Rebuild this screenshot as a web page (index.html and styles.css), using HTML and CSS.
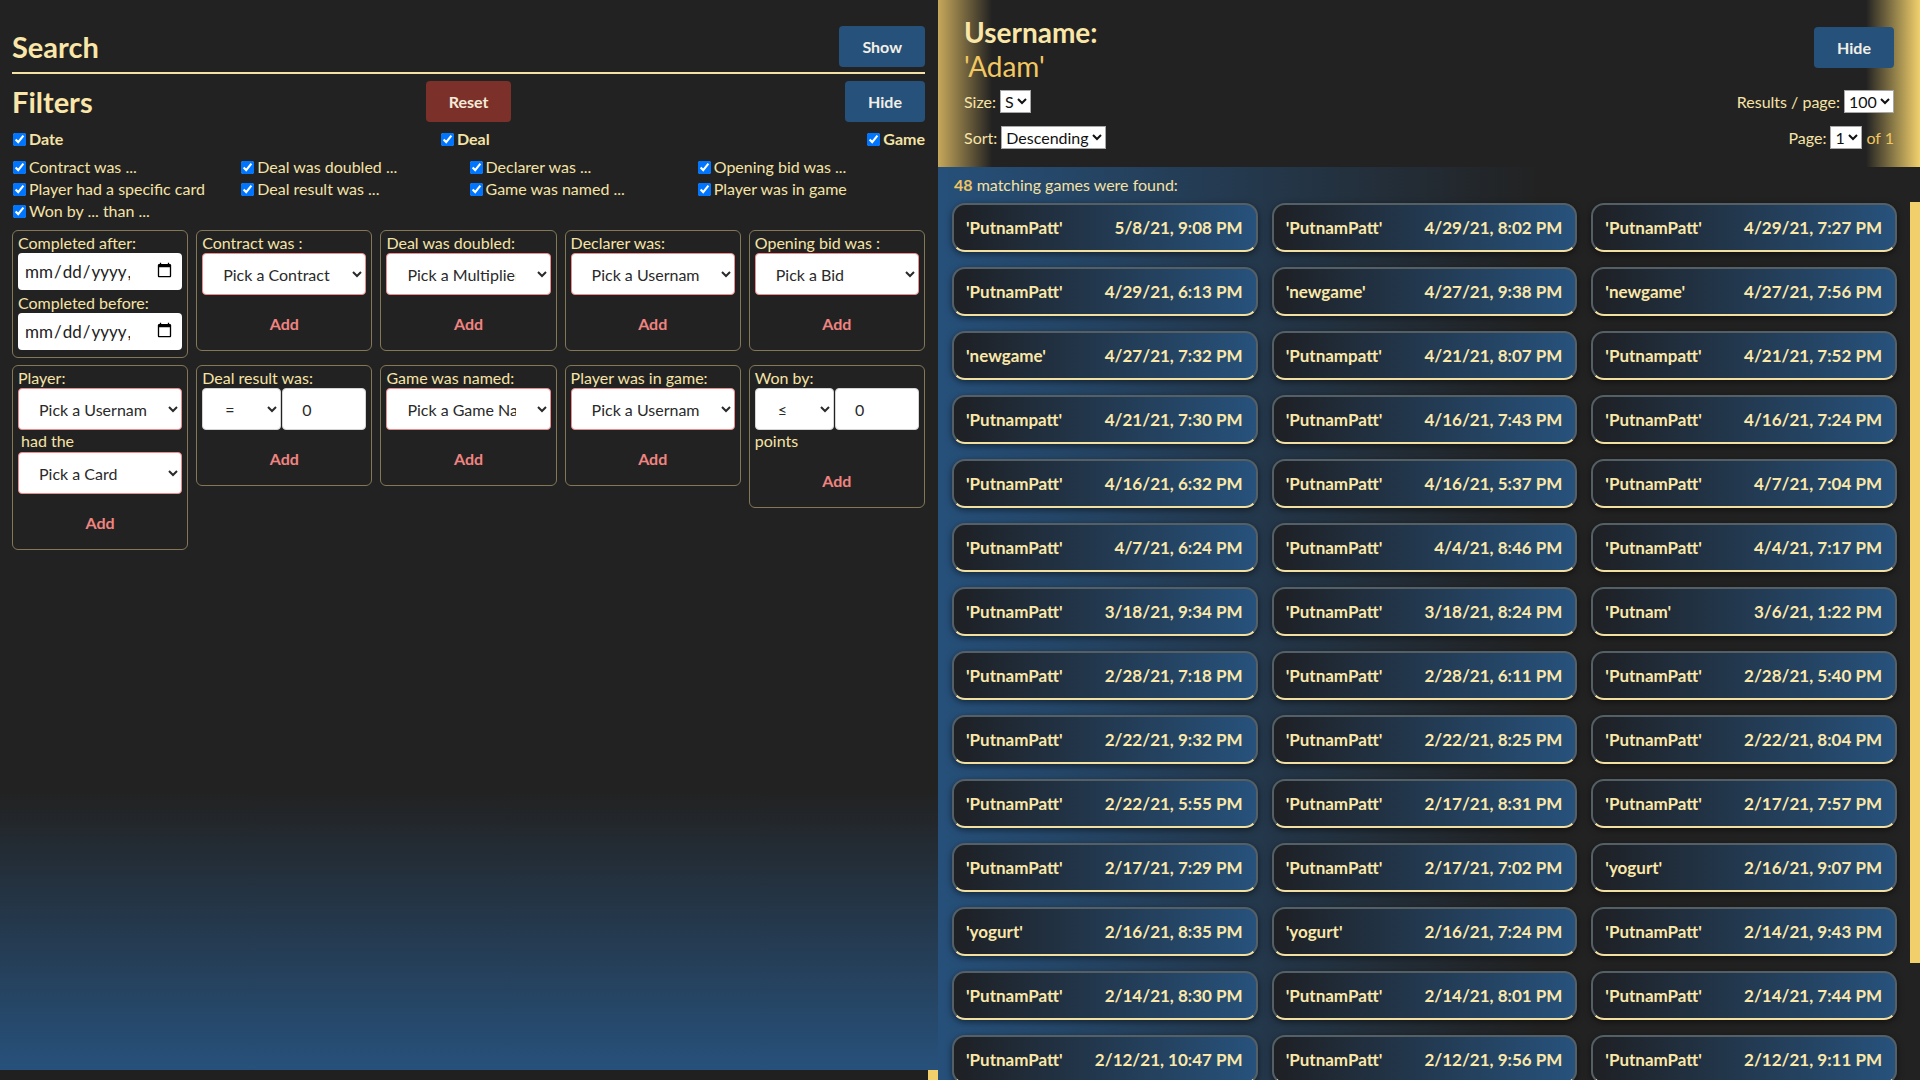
FILE: index.html
```html
<!DOCTYPE html>
<html lang="en">
<head>
<meta charset="utf-8">
<title>Search</title>
<link rel="stylesheet" href="styles.css">
</head>
<body>
<div class="app">
  <section class="search-panel">
    <div class="search-content">
      <div class="title-row">
        <h1 class="title">Search</h1>
        <button class="btn btn-blue">Show</button>
      </div>
      <hr class="rule">
      <div class="title-row filters-row">
        <h1 class="title">Filters</h1>
        <button class="btn btn-red">Reset</button>
        <button class="btn btn-blue btn-end">Hide</button>
      </div>

      <div class="cat-row">
        <label class="check cat"><input type="checkbox" checked>Date</label>
        <label class="check cat"><input type="checkbox" checked>Deal</label>
        <label class="check cat"><input type="checkbox" checked>Game</label>
      </div>

      <div class="check-grid">
        <label class="check"><input type="checkbox" checked>Contract was ...</label>
        <label class="check"><input type="checkbox" checked>Deal was doubled ...</label>
        <label class="check"><input type="checkbox" checked>Declarer was ...</label>
        <label class="check"><input type="checkbox" checked>Opening bid was ...</label>
        <label class="check"><input type="checkbox" checked>Player had a specific card</label>
        <label class="check"><input type="checkbox" checked>Deal result was ...</label>
        <label class="check"><input type="checkbox" checked>Game was named ...</label>
        <label class="check"><input type="checkbox" checked>Player was in game</label>
        <label class="check"><input type="checkbox" checked>Won by ... than ...</label>
      </div>

      <div class="filter-grid">
        <div class="filter-box">
          <label class="f-label">Completed after:</label>
          <input class="date-input" type="datetime-local">
          <label class="f-label">Completed before:</label>
          <input class="date-input last" type="datetime-local">
        </div>
        <div class="filter-box">
          <label class="f-label">Contract was :</label>
          <select class="pick"><option>Pick a Contract</option></select>
          <button class="add">Add</button>
        </div>
        <div class="filter-box">
          <label class="f-label">Deal was doubled:</label>
          <select class="pick"><option>Pick a Multiplier</option></select>
          <button class="add">Add</button>
        </div>
        <div class="filter-box">
          <label class="f-label">Declarer was:</label>
          <select class="pick"><option>Pick a Username</option></select>
          <button class="add">Add</button>
        </div>
        <div class="filter-box">
          <label class="f-label">Opening bid was :</label>
          <select class="pick"><option>Pick a Bid</option></select>
          <button class="add">Add</button>
        </div>

        <div class="filter-box">
          <label class="f-label">Player:</label>
          <select class="pick"><option>Pick a Username</option></select>
          <span class="f-text indent">had the</span>
          <select class="pick"><option>Pick a Card</option></select>
          <button class="add">Add</button>
        </div>
        <div class="filter-box">
          <label class="f-label">Deal result was:</label>
          <div class="pair">
            <select class="op"><option>=</option></select>
            <input class="num" type="number" value="0">
          </div>
          <button class="add">Add</button>
        </div>
        <div class="filter-box">
          <label class="f-label">Game was named:</label>
          <select class="pick"><option>Pick a Game Name</option></select>
          <button class="add">Add</button>
        </div>
        <div class="filter-box">
          <label class="f-label">Player was in game:</label>
          <select class="pick"><option>Pick a Username</option></select>
          <button class="add">Add</button>
        </div>
        <div class="filter-box">
          <label class="f-label">Won by:</label>
          <div class="pair">
            <select class="op"><option>&le;</option></select>
            <input class="num" type="number" value="0">
          </div>
          <span class="f-text">points</span>
          <button class="add">Add</button>
        </div>
      </div>
    </div>
    <div class="hscroll"><div class="grip"></div></div>
  </section>

  <section class="results-panel">
    <header class="results-head">
      <h2 class="user-title">Username:<span class="user-name">'Adam'</span></h2>
      <button class="btn btn-blue head-btn">Hide</button>
      <div class="ctl ctl-left">Size:<select class="mini"><option>S</option></select></div>
      <div class="ctl ctl-right">Results / page:<select class="mini"><option>100</option></select></div>
      <div class="ctl ctl-left">Sort:<select class="mini"><option>Descending</option></select></div>
      <div class="ctl ctl-right">Page:<select class="mini"><option>1</option></select><span class="gold of">of 1</span></div>
    </header>

    <div class="results-body">
      <div class="results-list">
        <p class="count"><b class="gold">48</b> matching games were found:</p>
        <div class="game-grid">
          <div class="game"><span>'PutnamPatt'</span><span>5/8/21, 9:08 PM</span></div>
          <div class="game"><span>'PutnamPatt'</span><span>4/29/21, 8:02 PM</span></div>
          <div class="game"><span>'PutnamPatt'</span><span>4/29/21, 7:27 PM</span></div>
          <div class="game"><span>'PutnamPatt'</span><span>4/29/21, 6:13 PM</span></div>
          <div class="game"><span>'newgame'</span><span>4/27/21, 9:38 PM</span></div>
          <div class="game"><span>'newgame'</span><span>4/27/21, 7:56 PM</span></div>
          <div class="game"><span>'newgame'</span><span>4/27/21, 7:32 PM</span></div>
          <div class="game"><span>'Putnampatt'</span><span>4/21/21, 8:07 PM</span></div>
          <div class="game"><span>'Putnampatt'</span><span>4/21/21, 7:52 PM</span></div>
          <div class="game"><span>'Putnampatt'</span><span>4/21/21, 7:30 PM</span></div>
          <div class="game"><span>'PutnamPatt'</span><span>4/16/21, 7:43 PM</span></div>
          <div class="game"><span>'PutnamPatt'</span><span>4/16/21, 7:24 PM</span></div>
          <div class="game"><span>'PutnamPatt'</span><span>4/16/21, 6:32 PM</span></div>
          <div class="game"><span>'PutnamPatt'</span><span>4/16/21, 5:37 PM</span></div>
          <div class="game"><span>'PutnamPatt'</span><span>4/7/21, 7:04 PM</span></div>
          <div class="game"><span>'PutnamPatt'</span><span>4/7/21, 6:24 PM</span></div>
          <div class="game"><span>'PutnamPatt'</span><span>4/4/21, 8:46 PM</span></div>
          <div class="game"><span>'PutnamPatt'</span><span>4/4/21, 7:17 PM</span></div>
          <div class="game"><span>'PutnamPatt'</span><span>3/18/21, 9:34 PM</span></div>
          <div class="game"><span>'PutnamPatt'</span><span>3/18/21, 8:24 PM</span></div>
          <div class="game"><span>'Putnam'</span><span>3/6/21, 1:22 PM</span></div>
          <div class="game"><span>'PutnamPatt'</span><span>2/28/21, 7:18 PM</span></div>
          <div class="game"><span>'PutnamPatt'</span><span>2/28/21, 6:11 PM</span></div>
          <div class="game"><span>'PutnamPatt'</span><span>2/28/21, 5:40 PM</span></div>
          <div class="game"><span>'PutnamPatt'</span><span>2/22/21, 9:32 PM</span></div>
          <div class="game"><span>'PutnamPatt'</span><span>2/22/21, 8:25 PM</span></div>
          <div class="game"><span>'PutnamPatt'</span><span>2/22/21, 8:04 PM</span></div>
          <div class="game"><span>'PutnamPatt'</span><span>2/22/21, 5:55 PM</span></div>
          <div class="game"><span>'PutnamPatt'</span><span>2/17/21, 8:31 PM</span></div>
          <div class="game"><span>'PutnamPatt'</span><span>2/17/21, 7:57 PM</span></div>
          <div class="game"><span>'PutnamPatt'</span><span>2/17/21, 7:29 PM</span></div>
          <div class="game"><span>'PutnamPatt'</span><span>2/17/21, 7:02 PM</span></div>
          <div class="game"><span>'yogurt'</span><span>2/16/21, 9:07 PM</span></div>
          <div class="game"><span>'yogurt'</span><span>2/16/21, 8:35 PM</span></div>
          <div class="game"><span>'yogurt'</span><span>2/16/21, 7:24 PM</span></div>
          <div class="game"><span>'PutnamPatt'</span><span>2/14/21, 9:43 PM</span></div>
          <div class="game"><span>'PutnamPatt'</span><span>2/14/21, 8:30 PM</span></div>
          <div class="game"><span>'PutnamPatt'</span><span>2/14/21, 8:01 PM</span></div>
          <div class="game"><span>'PutnamPatt'</span><span>2/14/21, 7:44 PM</span></div>
          <div class="game"><span>'PutnamPatt'</span><span>2/12/21, 10:47 PM</span></div>
          <div class="game"><span>'PutnamPatt'</span><span>2/12/21, 9:56 PM</span></div>
          <div class="game"><span>'PutnamPatt'</span><span>2/12/21, 9:11 PM</span></div>
        </div>
      </div>
      <div class="vscroll"><div class="thumb"></div></div>
    </div>
  </section>
</div>
</body>
</html>
```

FILE: styles.css
```css
html, body {
  margin: 0;
  padding: 0;
  background: #222222;
}

body {
  font-family: Lato, "Noto Sans", "Liberation Sans", sans-serif;
  font-size: 16px;
  color: #f8e6a7;
}

.app {
  display: flex;
  height: 100vh;
  overflow: hidden;
}

/* ---------- left: search / filters ---------- */

.search-panel {
  flex: none;
  width: 938px;
  height: 1080px;
  display: flex;
  flex-direction: column;
}

.search-content {
  flex: 1;
  min-height: 0;
  overflow: hidden;
  padding: 26px 13px 0 12px;
  background: linear-gradient(to bottom, #222222 0%, #222222 74%, #27517b 100%);
}

.hscroll {
  flex: none;
  height: 10px;
  display: flex;
  justify-content: flex-end;
  background: #202020;
}

.grip {
  width: 10px;
  height: 10px;
  background: #f1cf6b;
}

.title-row {
  display: flex;
  align-items: center;
  justify-content: space-between;
  height: 41px;
}

.filters-row {
  display: grid;
  grid-template-columns: 1fr auto 1fr;
}

.title {
  margin: 0;
  font-size: 29px;
  line-height: 41px;
  font-weight: 700;
  color: #f9e6a8;
}

.btn {
  font-family: inherit;
  font-size: 16px;
  font-weight: 700;
  line-height: 19px;
  padding: 11px 23px;
  border: none;
  border-radius: 4px;
  color: #f2efe6;
  cursor: pointer;
}

.btn-blue {
  background: #26517b;
}

.btn-red {
  background: #7b3129;
  color: #f6ead8;
}

.btn-end {
  justify-self: end;
}

.rule {
  margin: 5px 0 7px;
  border: none;
  height: 2px;
  background: #f3e1a6;
}

.check {
  display: flex;
  align-items: center;
  font-size: 16px;
  line-height: 22px;
  color: #f5e3a6;
  white-space: nowrap;
}

.check input {
  margin: 0 3px 0 1px;
  width: 13px;
  height: 13px;
}

.cat-row {
  display: flex;
  justify-content: space-between;
  margin-top: 6px;
}

.cat {
  font-weight: 700;
}

.check-grid {
  display: grid;
  grid-template-columns: repeat(4, minmax(0, 1fr));
  margin-top: 6px;
}

.filter-grid {
  display: grid;
  grid-template-columns: repeat(5, minmax(0, 1fr));
  gap: 7px 8px;
  align-items: start;
  margin-top: 8px;
}

.filter-box {
  display: flex;
  flex-direction: column;
  min-width: 0;
  border: 1px solid #847756;
  border-radius: 6px;
  padding: 2px 5px 7px;
}

.f-label,
.f-text {
  font-size: 16px;
  line-height: 20px;
  color: #f6e4a7;
}

.f-text {
  line-height: 22px;
}

.indent {
  padding-left: 3px;
}

.date-input {
  box-sizing: border-box;
  width: 100%;
  min-width: 0;
  height: 37px;
  margin: 0 0 3px;
  padding: 6px 9px 6px 6px;
  border: none;
  border-radius: 4px;
  background: #ffffff;
  font-family: inherit;
  font-size: 17px;
  color: #222222;
}

.date-input::-webkit-calendar-picker-indicator {
  width: 17px;
  height: 19px;
  padding: 0;
  margin-left: 26px;
}

.date-input.last {
  margin-bottom: 0;
}

.pick {
  box-sizing: border-box;
  width: 100%;
  min-width: 0;
  height: 42px;
  padding: 0 18px 0 16px;
  border: 1px solid #f08b8b;
  border-radius: 4px;
  background: #ffffff;
  font-family: inherit;
  font-size: 16px;
  color: #2a2a2a;
}

.pair {
  display: flex;
  gap: 1px;
}

.op,
.num {
  box-sizing: border-box;
  flex: 1;
  min-width: 0;
  width: 50%;
  height: 42px;
  border: 1px solid #d4d4d4;
  border-radius: 4px;
  background: #ffffff;
  font-family: inherit;
  font-size: 16px;
  color: #2a2a2a;
}

.op {
  padding: 0 4px 0 18px;
}

.num {
  padding: 0 8px 0 19px;
}

.num::-webkit-inner-spin-button,
.num::-webkit-outer-spin-button {
  -webkit-appearance: none;
  margin: 0;
}

.add {
  align-self: center;
  margin-top: 10px;
  padding: 9px 16px;
  border: none;
  background: transparent;
  font-family: inherit;
  font-size: 16px;
  line-height: 20px;
  font-weight: 700;
  color: #f08480;
  cursor: pointer;
}

/* ---------- right: results ---------- */

.results-panel {
  flex: 1;
  min-width: 0;
  display: flex;
  flex-direction: column;
}

.results-head {
  flex: none;
  display: grid;
  grid-template-columns: 1fr auto;
  grid-template-rows: auto 36px 36px;
  align-items: center;
  padding: 15px 26px 12px;
  background: linear-gradient(to right, #c7a85b 0%, #222222 5.5%, #222222 94.5%, #f2d16c 100%);
}

.user-title {
  margin: 0;
  font-size: 28px;
  line-height: 34px;
  font-weight: 700;
  color: #fae7a8;
}

.user-name {
  display: block;
  font-weight: 400;
  color: #f2c860;
}

.head-btn {
  align-self: start;
  margin-top: 12px;
  justify-self: end;
}

.ctl {
  display: flex;
  align-items: center;
  gap: 4px;
  font-size: 16px;
  color: #f6e4a7;
  white-space: nowrap;
}

.ctl-right {
  justify-self: end;
}

.mini {
  height: 23px;
  padding: 0;
  border: 1px solid #a8a8a8;
  border-radius: 0;
  background: #ffffff;
  font-family: inherit;
  font-size: 16px;
  color: #111111;
}

.gold {
  color: #f0c661;
}

.results-body {
  flex: 1;
  min-height: 0;
  display: flex;
}

.results-list {
  flex: 1;
  min-width: 0;
  overflow: hidden;
  padding: 8px 13px 0 14px;
  background: linear-gradient(to right, #26507a 0%, #222222 62%);
}

.vscroll {
  flex: none;
  width: 10px;
  padding-top: 35px;
  background: #222222;
}

.thumb {
  height: 761px;
  background: #f1cf6b;
}

.count {
  margin: 0 0 8px;
  padding-left: 2px;
  font-size: 16px;
  line-height: 20px;
  color: #f4e1a4;
}

.count b {
  font-weight: 700;
}

.game-grid {
  display: grid;
  grid-template-columns: repeat(3, minmax(0, 1fr));
  gap: 15px 14px;
}

.game {
  box-sizing: border-box;
  height: 49px;
  display: flex;
  align-items: center;
  justify-content: space-between;
  padding: 0 13px 0 12px;
  border: 2px solid #545f66;
  border-bottom-color: #f3dfa0;
  border-radius: 13px;
  background: linear-gradient(to right, #1e2024 0%, #27527c 100%);
  box-shadow: 0 2px 6px rgba(0, 0, 0, 0.5);
  font-size: 17px;
  font-weight: 700;
  color: #fbe8a9;
  white-space: nowrap;
}
```
